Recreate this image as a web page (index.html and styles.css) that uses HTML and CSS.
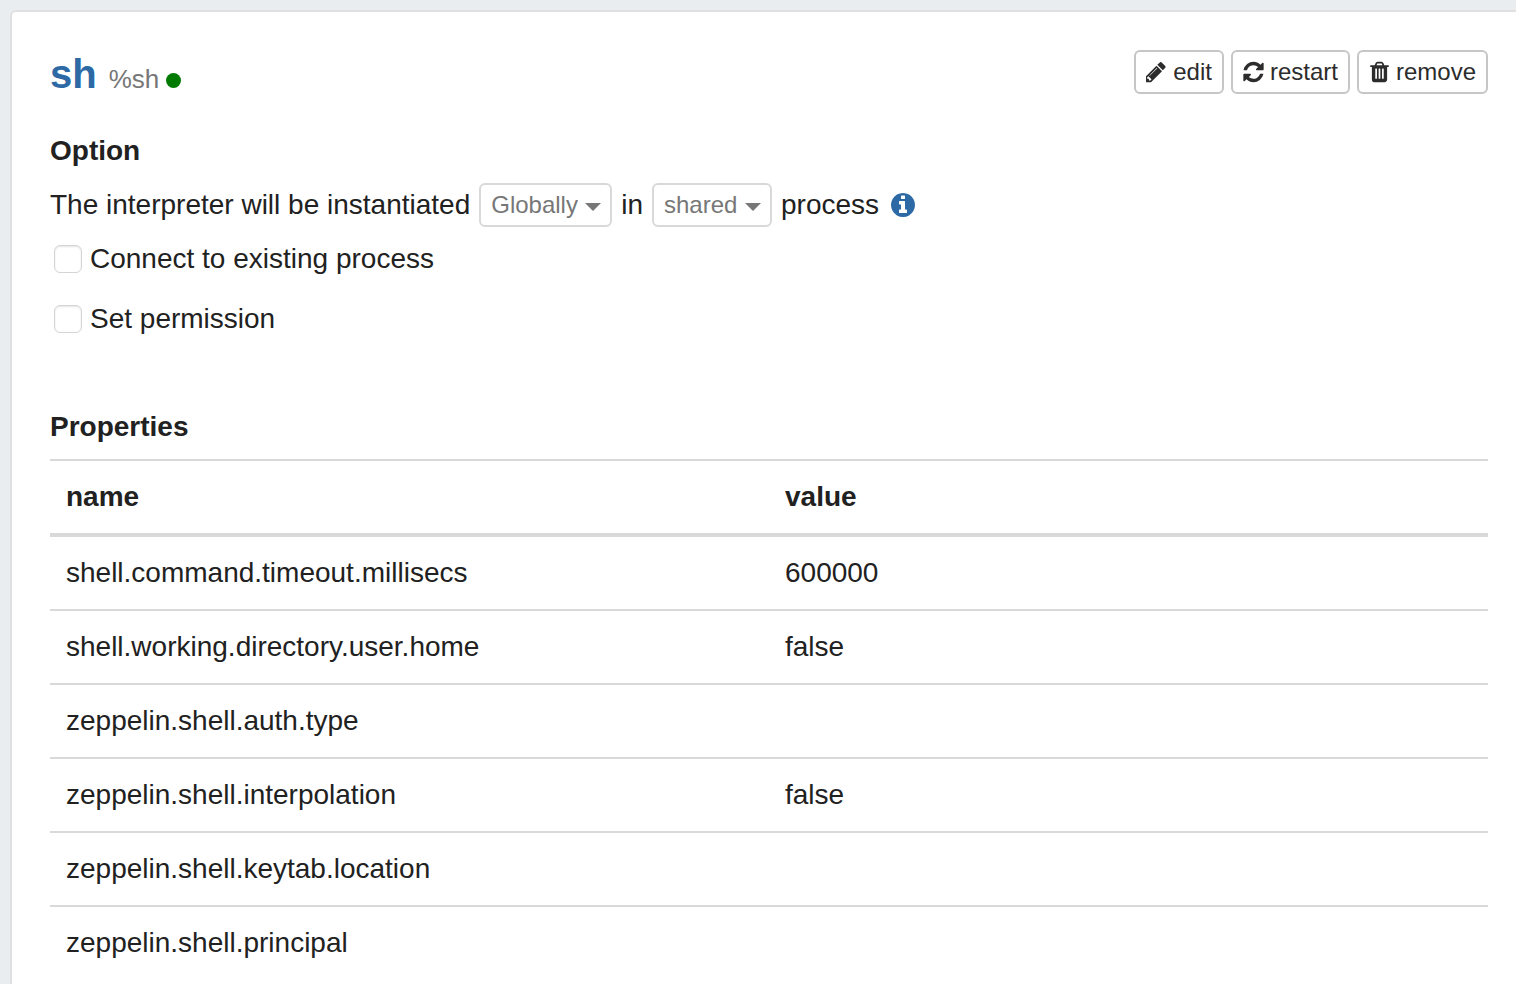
FILE: index.html
```html
<!DOCTYPE html>
<html lang="en">
<head>
<meta charset="utf-8">
<meta name="viewport" content="width=device-width, initial-scale=1">
<title>Interpreter: sh</title>
<link rel="stylesheet" href="styles.css">
</head>
<body>
<main class="card">
  <header class="card-header">
    <h1 class="title">
      <span class="title-name">sh</span>
      <small class="title-alias">%sh</small>
      <span class="status-dot"></span>
    </h1>
    <div class="actions">
      <button class="btn" type="button">
        <svg class="icon" viewBox="192 64 1536 1664" aria-hidden="true"><path d="M491 1536l91-91-235-235-91 91v107h128v128h107zm523-928q0-22-22-22-10 0-17 7l-542 542q-7 7-7 17 0 22 22 22 10 0 17-7l542-542q7-7 7-17zm-54-192l416 416-832 832h-416v-416zm683 96q0 53-37 90l-166 166-416-416 166-165q36-38 90-38 53 0 91 38l235 234q37 39 37 91z"/></svg>
        <span>edit</span>
      </button>
      <button class="btn" type="button">
        <svg class="icon" viewBox="128 64 1536 1664" aria-hidden="true"><path d="M1639 1056q0 5-1 7-64 268-268 434.500t-478 166.500q-146 0-282.500-55t-243.500-157l-129 129q-19 19-45 19t-45-19-19-45v-448q0-26 19-45t45-19h448q26 0 45 19t19 45-19 45l-137 137q71 66 161 102t187 36q134 0 250-65t186-179q11-17 53-117 8-23 30-23h192q13 0 22.500 9.500t9.500 22.500zm25-800v448q0 26-19 45t-45 19h-448q-26 0-45-19t-19-45 19-45l138-138q-148-137-349-137-134 0-250 65t-186 179q-11 17-53 117-8 23-30 23h-199q-13 0-22.500-9.500t-9.500-22.500v-7q65-268 270-434.500t480-166.500q146 0 284 55.500t245 156.500l130-129q19-19 45-19t45 19 19 45z"/></svg>
        <span>restart</span>
      </button>
      <button class="btn" type="button">
        <svg class="icon" viewBox="128 64 1536 1664" aria-hidden="true"><path d="M704 1376v-704q0-14-9-23t-23-9h-64q-14 0-23 9t-9 23v704q0 14 9 23t23 9h64q14 0 23-9t9-23zm256 0v-704q0-14-9-23t-23-9h-64q-14 0-23 9t-9 23v704q0 14 9 23t23 9h64q14 0 23-9t9-23zm256 0v-704q0-14-9-23t-23-9h-64q-14 0-23 9t-9 23v704q0 14 9 23t23 9h64q14 0 23-9t9-23zm-544-992h448l-48-117q-7-9-17-11h-317q-10 2-17 11zm928 32v64q0 14-9 23t-23 9h-96v948q0 83-47 143.500t-113 60.500h-832q-66 0-113-58.500t-47-141.500v-952h-96q-14 0-23-9t-9-23v-64q0-14 9-23t23-9h309l70-167q15-37 54-63t79-26h320q40 0 79 26t54 63l70 167h309q14 0 23 9t9 23z"/></svg>
        <span>remove</span>
      </button>
    </div>
  </header>

  <section class="option">
    <h2 class="heading">Option</h2>
    <div class="sentence">
      <label for="scope">The interpreter will be instantiated</label>
      <span class="dropdown"><select id="scope"><option>Globally</option></select></span>
      <label for="mode">in</label>
      <span class="dropdown"><select id="mode"><option>shared</option></select></span>
      <span>process</span>
      <svg class="info" viewBox="128 128 1536 1536" role="img" aria-label="Information"><path d="M1152 1376v-160q0-14-9-23t-23-9h-96v-512q0-14-9-23t-23-9h-320q-14 0-23 9t-9 23v160q0 14 9 23t23 9h96v320h-96q-14 0-23 9t-9 23v160q0 14 9 23t23 9h448q14 0 23-9t9-23zm-128-896v-160q0-14-9-23t-23-9h-192q-14 0-23 9t-9 23v160q0 14 9 23t23 9h192q14 0 23-9t9-23zm640 416q0 209-103 385.500t-279.500 279.500-385.500 103-385.500-103-279.500-279.500-103-385.500 103-385.500 279.500-279.500 385.500-103 385.500 103 279.500 279.500 103 385.500z"/></svg>
    </div>
    <div class="check">
      <input type="checkbox" id="existing">
      <label for="existing">Connect to existing process</label>
    </div>
    <div class="check">
      <input type="checkbox" id="permission">
      <label for="permission">Set permission</label>
    </div>
  </section>

  <section>
    <h2 class="heading">Properties</h2>
    <table class="properties">
      <thead>
        <tr><th scope="col">name</th><th scope="col">value</th></tr>
      </thead>
      <tbody>
        <tr><td>shell.command.timeout.millisecs</td><td>600000</td></tr>
        <tr><td>shell.working.directory.user.home</td><td>false</td></tr>
        <tr><td>zeppelin.shell.auth.type</td><td></td></tr>
        <tr><td>zeppelin.shell.interpolation</td><td>false</td></tr>
        <tr><td>zeppelin.shell.keytab.location</td><td></td></tr>
        <tr><td>zeppelin.shell.principal</td><td></td></tr>
      </tbody>
    </table>
  </section>
</main>
</body>
</html>
```

FILE: styles.css
```css
* {
  box-sizing: border-box;
}

body {
  display: flex;
  min-height: 100vh;
  margin: 0;
  padding: 10px 0 0 10px;
  background: #e9edf0;
  color: #212121;
  font-family: "Liberation Sans", Arial, sans-serif;
  font-size: 28px;
  line-height: 40px;
}

.card {
  flex: 1;
  padding: 38px 28px 0 38px;
  border: 2px solid #e0e0e0;
  border-width: 2px 0 0 2px;
  border-top-left-radius: 6px;
  background: #fff;
}

.card-header {
  display: flex;
  justify-content: space-between;
  align-items: flex-start;
  margin-bottom: 28px;
}

.title {
  display: flex;
  align-items: baseline;
  margin: 0;
  font-size: 40px;
  line-height: 48px;
}

.title-name {
  color: #2c69a5;
}

.title-alias {
  margin-left: 12px;
  color: #777;
  font-size: 26px;
  font-weight: 400;
}

.status-dot {
  width: 15px;
  height: 15px;
  margin-left: 7px;
  border-radius: 50%;
  background: #007a00;
}

.actions {
  display: flex;
  gap: 7px;
}

.btn {
  display: flex;
  align-items: center;
  gap: 6px;
  padding: 0 10px;
  border: 2px solid #c6c6c6;
  border-radius: 6px;
  background: #fff;
  color: #2c2c2c;
  font: 24px/40px "Liberation Sans", Arial, sans-serif;
}

.icon {
  width: 21px;
  height: 22px;
  fill: currentColor;
}

.heading {
  margin: 0;
  font-size: 28px;
  line-height: 40px;
}

.option {
  margin-bottom: 68px;
}

.sentence {
  display: flex;
  align-items: center;
  gap: 9px;
  margin: 12px 0;
}

.dropdown {
  position: relative;
  display: flex;
}

.dropdown::after {
  content: "";
  position: absolute;
  top: 20px;
  right: 11px;
  border: 8px solid transparent;
  border-top-color: #777;
  border-bottom-width: 0;
  pointer-events: none;
}

.dropdown select {
  height: 44px;
  padding: 0 32px 0 10px;
  border: 2px solid #d9d9d9;
  border-radius: 6px;
  appearance: none;
  background: #fff;
  color: #777;
  font: 24px/40px "Liberation Sans", Arial, sans-serif;
}

.info {
  width: 24px;
  height: 24px;
  margin-left: 3px;
  fill: #2c69a5;
}

.check {
  display: flex;
  align-items: center;
  gap: 8px;
  margin-bottom: 20px;
  padding-left: 4px;
}

.check input {
  width: 28px;
  height: 28px;
  margin: 0;
  border: 1px solid #d4d4d4;
  border-radius: 6px;
  appearance: none;
  background: #fff;
  box-shadow: inset 0 1px 2px #e4e4e4;
}

.check input:checked {
  background: #2c69a5;
}

.properties {
  width: 100%;
  margin-top: 12px;
  border-collapse: separate;
  border-spacing: 0;
  table-layout: fixed;
}

.properties th,
.properties td {
  padding: 16px;
  border-top: 2px solid #d9d9d9;
  text-align: left;
}

.properties tbody tr:first-child td {
  border-top-width: 4px;
}
```
